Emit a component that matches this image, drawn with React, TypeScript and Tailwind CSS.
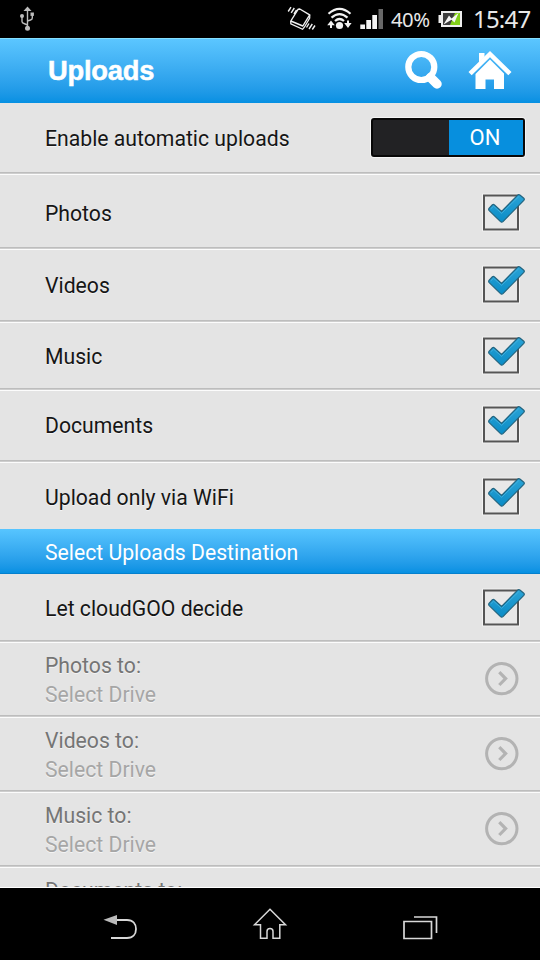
import type { ReactNode } from "react";

const label = "text-[21.2px] leading-[28px] whitespace-nowrap [text-shadow:0_1px_0_#f4f4f4]";

function CheckMark() {
  return (
    <svg width="46" height="40" viewBox="0 0 46 40" className="mb-[2px] shrink-0">
      <defs>
        <linearGradient id="tick" x1="0" y1="0" x2="0" y2="1">
          <stop offset="0" stopColor="#2aa3d6" />
          <stop offset="1" stopColor="#0b8cc6" />
        </linearGradient>
      </defs>
      <rect x="1.2" y="1.7" width="37.6" height="37.6" fill="#f8f8f8" />
      <rect x="3" y="3.5" width="34" height="34" fill="#e8e8e8" stroke="#555" strokeWidth="2" />
      <path
        d="M8.2 16.2L11.4 12.8Q12.4 12 13.5 13L20.6 19.4L36.4 3.4Q37.8 2.1 39.2 3.2L42.8 6.2Q43.8 7.2 42.8 8.4L22 29.6Q20.7 30.7 19.5 29.6L8.2 18.6Q7.2 17.4 8.2 16.2Z"
        fill="url(#tick)"
        stroke="#22647f"
        strokeWidth="1.2"
      />
      <path d="M9.8 16.8L12.6 14.2L20.6 21.3L37.8 4.6" fill="none" stroke="#4db8e3" strokeWidth="0.7" />
    </svg>
  );
}

function ChevronBadge() {
  return (
    <svg width="34" height="36" viewBox="0 0 34 36" className="shrink-0">
      <circle cx="16.8" cy="17.6" r="15.2" fill="none" stroke="#b3b3b3" strokeWidth="3" />
      <path d="M14.3 11.2L20.6 17.6L14.3 24" fill="none" stroke="#b3b3b3" strokeWidth="3.2" />
    </svg>
  );
}

function Divider() {
  return (
    <div className="flex shrink-0 flex-col">
      <div className="h-px bg-[#bdbdbd]" />
      <div className="h-px bg-[#cecece]" />
      <div className="h-px bg-[#fcfcfc]" />
    </div>
  );
}

function CheckRow({ text, size, last = false }: { text: string; size: string; last?: boolean }) {
  return (
    <div className={`flex shrink-0 flex-col ${size}`}>
      <div className="flex min-h-0 flex-1 items-center justify-between pr-[13px] pl-[45px]">
        <span className={`${label} pt-[2px] text-[#161616]`}>{text}</span>
        <CheckMark />
      </div>
      {!last && <Divider />}
    </div>
  );
}

function DriveRow({ text }: { text: string }) {
  return (
    <div className="flex h-[75px] shrink-0 flex-col">
      <div className="flex flex-1 items-center justify-between pr-[21px] pl-[45px]">
        <div className="flex flex-col gap-px pt-[2px]">
          <span className={`${label} text-[#757575]`}>{text}</span>
          <span className={`${label} text-[#a6a6a6]`}>Select Drive</span>
        </div>
        <ChevronBadge />
      </div>
      <Divider />
    </div>
  );
}

function StatusBar() {
  return (
    <header className="flex h-[38px] shrink-0 items-center justify-between bg-black text-[#e8e8e8]">
      <svg width="48" height="38" viewBox="0 0 48 38" fill="none" stroke="#bcbcbc" strokeWidth="1.4">
        <path d="M27.5 9V28M22 16V21.5Q22 23 24 23.5L27.5 25M32.3 14.5V18Q32.3 19.5 30.5 20L27.5 21" />
        <path d="M27.5 6.5L31.5 11H23.5Z" fill="#bcbcbc" stroke="none" />
        <circle cx="22" cy="16" r="2" fill="#bcbcbc" stroke="none" />
        <rect x="30.5" y="12.5" width="3.4" height="3.4" fill="#bcbcbc" stroke="none" />
        <circle cx="27.5" cy="28.3" r="2.5" fill="#bcbcbc" stroke="none" />
      </svg>
      <div className="flex h-[38px] items-center pr-[10px]">
        <svg width="105" height="38" viewBox="0 0 105 38" fill="none" stroke="#f1f1f1">
          <path d="M14.8 9L24.7 14.8L17.8 26L5.8 21L13.2 9.2Z" strokeWidth="1.4" strokeLinejoin="round" />
          <path d="M5.8 21V23.8L17.6 29.3L19.5 27L24.7 18V14.8" strokeWidth="1.3" />
          <path d="M3.2 11.5L6 7.2M6.2 12.8L9.3 8M9 14L11.6 10M21.5 27.5L24 23.5M24 29L27.3 24M27.3 29.5L30 25.5" strokeWidth="1.4" />
          <g transform="translate(-3 0)">
            <path d="M46.5 13.8Q57.5 4 68.5 13.8M49.5 17.6Q57.5 10.5 65.5 17.6M53 21Q57.5 17 62 21" strokeWidth="2.2" />
            <circle cx="57.5" cy="25.5" r="3.6" fill="#f1f1f1" stroke="none" />
            <path d="M48 25.2H45.2L49 20.5L52.8 25.2H50V28H48ZM65 23V20.5H67V23H69.6L66 28L62.2 23Z" fill="#f1f1f1" stroke="none" />
            <path d="M78.3 24.5H83V29H78.3ZM84.3 20H89V29H84.3ZM90.3 15H95V29H90.3Z" fill="#f5f5f5" stroke="none" />
            <path d="M96.5 9H101V29H96.5Z" fill="#686868" stroke="none" />
          </g>
        </svg>
        <span className="w-[44px] pl-px font-['Noto_Sans'] text-[20.3px] leading-[38px] tracking-[-0.5px] whitespace-nowrap">40%</span>
        <svg width="38" height="38" viewBox="0 0 38 38">
          <path d="M7 11H28V27H7V23H4.5V15H7Z" fill="#eee" />
          <rect x="9" y="13" width="17" height="12" fill="#3c3c3c" />
          <path d="M21 13H26V25H16Z" fill="#83cf19" />
          <path d="M9.5 24.5L15 15.5L17.5 18.5L24.5 13L20.5 22.5L17.5 19.8Z" fill="#f6f6f6" />
        </svg>
        <span className="w-[58px] pl-px font-['Noto_Sans'] text-[24px] leading-[38px] tracking-[-0.8px] whitespace-nowrap">15:47</span>
      </div>
    </header>
  );
}

function TitleBar({ children }: { children: ReactNode }) {
  return (
    <div className="flex h-[65px] shrink-0 items-center justify-between border-t border-[#85e0ff] bg-linear-to-b from-[#5bc6ff] to-[#0590e2] pr-[29px] pl-[48px]">
      {children}
    </div>
  );
}

export default function App() {
  return (
    <div className="flex h-[960px] w-[540px] flex-col overflow-hidden bg-[#e4e4e4] font-[Roboto,sans-serif]">
      <StatusBar />
      <TitleBar>
        <h1 className="font-['Liberation_Sans',sans-serif] text-[27.3px] leading-[36px] font-bold tracking-[-0.2px] text-white [-webkit-text-stroke:0.5px_white]">
          Uploads
        </h1>
        <svg width="110" height="50" viewBox="401 46 110 50" fill="none" className="overflow-visible">
          <circle cx="421.3" cy="67" r="13" stroke="#fff" strokeWidth="6.2" />
          <path d="M430.5 77.5L437 84" stroke="#fff" strokeWidth="9.5" strokeLinecap="round" />
          <path d="M479 53H484.5V57L479 62.5Z" fill="#fff" />
          <path d="M490 51L511.5 72L508.3 75.3L490 57.2L471.7 75.3L468.5 72Z" fill="#fff" />
          <path d="M490 59.5L504 73.5V89H494V79.5H485.5V89H475.5V74Z" fill="#fff" />
        </svg>
      </TitleBar>
      <main className="flex min-h-0 flex-1 flex-col overflow-hidden border-b border-white">
        <div className="flex h-[72px] shrink-0 flex-col">
          <div className="flex flex-1 items-center justify-between pr-[15px] pl-[45px]">
            <span className={`${label} pt-[3px] text-[#161616]`}>Enable automatic uploads</span>
            <div className="flex h-[39px] w-[154px] justify-end rounded-[3px] border-2 border-[#080808] bg-[#222224] ring-1 ring-[#f4f4f4]">
              <div className="flex w-[74px] items-center justify-center bg-[#078fde] pr-[2px] text-[22px] text-white">ON</div>
            </div>
          </div>
          <Divider />
        </div>
        <CheckRow text="Photos" size="h-[75px] pt-[3px]" />
        <CheckRow text="Videos" size="h-[73px]" />
        <CheckRow text="Music" size="h-[68px]" />
        <CheckRow text="Documents" size="h-[72px] [&>div:first-child]:pb-[2px]" />
        <CheckRow text="Upload only via WiFi" size="h-[66px] pt-px" last />
        <div className="flex h-[45px] shrink-0 items-center border-b border-[#0480cd] bg-linear-to-b from-[#57c5ff] to-[#0590e2] pl-[45px]">
          <span className="pt-[3px] text-[21.2px] leading-[28px] whitespace-nowrap text-white">Select Uploads Destination</span>
        </div>
        <CheckRow text="Let cloudGOO decide" size="h-[69px] pt-px" />
        <DriveRow text="Photos to:" />
        <DriveRow text="Videos to:" />
        <DriveRow text="Music to:" />
        <div className="flex h-[75px] shrink-0 items-start pt-[9px] pl-[45px]">
          <span className={`${label} text-[#757575]`}>Documents to:</span>
        </div>
      </main>
      <nav className="h-[72px] shrink-0 bg-black">
        <svg width="540" height="72" viewBox="0 888 540 72" fill="none" stroke="#d8d8d8" strokeWidth="2">
          <path d="M116 920H127C133 920 136 924 136 929S133 938 127 938H111" strokeWidth="1.8" />
          <path d="M103.5 919.8L117 915V925Z" fill="#bbb" stroke="none" />
          <path d="M270 909.3L254.5 924.8H260.5V938.3H267V931.5Q267 928.5 270 928.5Q273 928.5 273 931.5V938.3H279.8V924.8H285.5Z" strokeWidth="1.5" />
          <path d="M404 921.5H431.5V938.5H404ZM414 917H436.5V933" strokeWidth="1.7" />
        </svg>
      </nav>
    </div>
  );
}
